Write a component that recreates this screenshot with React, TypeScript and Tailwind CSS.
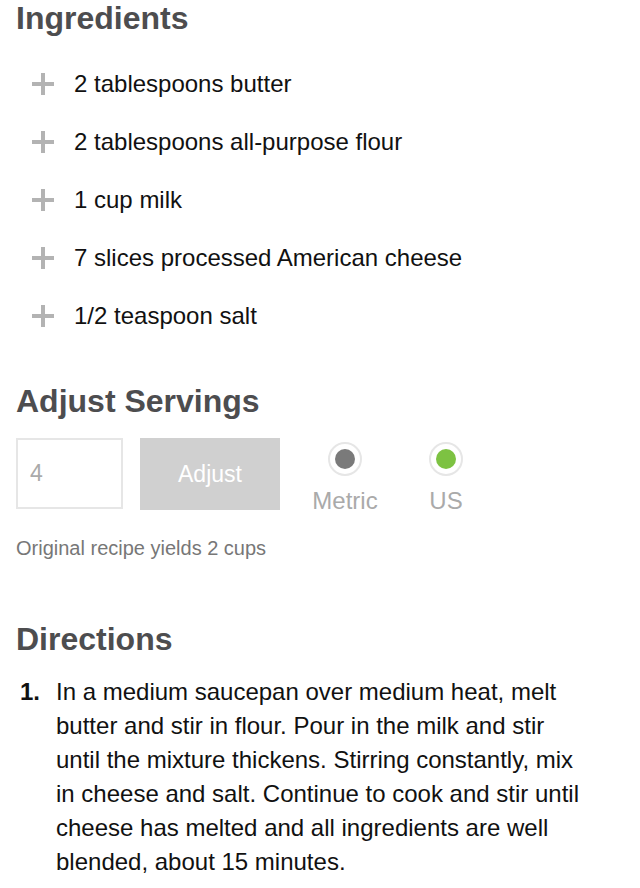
import React from "react";

const ingredients = [
  "2 tablespoons butter",
  "2 tablespoons all-purpose flour",
  "1 cup milk",
  "7 slices processed American cheese",
  "1/2 teaspoon salt",
];

function Plus() {
  return (
    <svg width="22" height="22" viewBox="0 0 22 22" className="shrink-0">
      <rect x="9" y="0" width="4" height="22" fill="#b3b3b3" />
      <rect x="0" y="9" width="22" height="4" fill="#b3b3b3" />
    </svg>
  );
}

function Radio({ color, label }: { color: string; label: string }) {
  return (
    <div className="w-[80px] flex flex-col items-center">
      <div className="w-[34px] h-[34px] rounded-full border-2 border-[#e6e6e6] flex items-center justify-center bg-white">
        <div className="w-[20px] h-[20px] rounded-full" style={{ backgroundColor: color }} />
      </div>
      <div className="mt-[12px] text-[24px] leading-[26px] text-[#aaaaaa]">{label}</div>
    </div>
  );
}

export default function App() {
  return (
    <div className="bg-white w-[640px] min-h-[888px] pl-4 pr-4 pt-[2px] font-['Liberation_Sans',Arial,sans-serif]">
      <h2 className="text-[32px] leading-[32px] font-bold text-[#4d4d4f]">Ingredients</h2>
      <ul className="mt-[21px] pl-4">
        {ingredients.map((i) => (
          <li key={i} className="h-[58px] flex items-center gap-[20px] text-[24px] text-[#111]">
            <Plus />
            <span>{i}</span>
          </li>
        ))}
      </ul>

      <h2 className="mt-[38px] text-[32px] leading-[36px] font-bold text-[#4d4d4f]">Adjust Servings</h2>
      <div className="mt-[19px] flex items-start">
        <div className="w-[107px] h-[71px] border-2 border-[#e6e6e6] flex items-center pl-[12px] text-[23px] text-[#aaaaaa]">
          4
        </div>
        <div className="ml-[17px] w-[140px] h-[72px] bg-[#d0d0d0] flex items-center justify-center text-[23px] text-white">
          Adjust
        </div>
        <div className="ml-[25px] mt-[4px] flex gap-[21px]">
          <Radio color="#7a7a7a" label="Metric" />
          <Radio color="#7dc242" label="US" />
        </div>
      </div>
      <p className="mt-[22px] text-[20px] leading-[24px] text-[#777777]">Original recipe yields 2 cups</p>

      <h2 className="mt-[61px] text-[32px] leading-[36px] font-bold text-[#4d4d4f]">Directions</h2>
      <ol className="mt-[18px]">
        <li className="flex text-[24px] leading-[34px] text-[#111]">
          <span className="w-[40px] pl-[4px] font-bold shrink-0">1.</span>
          <span className="w-[532px]">
            In a medium saucepan over medium heat, melt butter and stir in flour. Pour in the milk and stir until the mixture thickens. Stirring constantly, mix in cheese and salt. Continue to cook and stir until cheese has melted and all ingredients are well blended, about 15 minutes.
          </span>
        </li>
      </ol>
    </div>
  );
}
